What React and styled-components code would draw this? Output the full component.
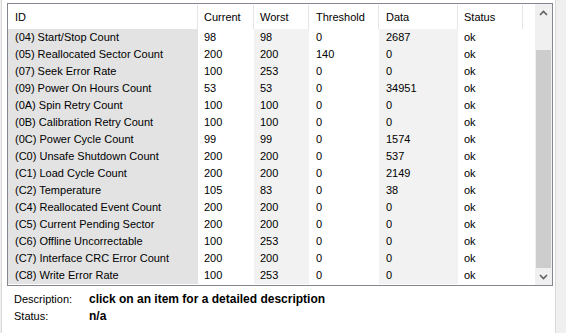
import React from "react";
import styled, { createGlobalStyle } from "styled-components";

const Global = createGlobalStyle`
  html, body { margin: 0; padding: 0; background: #f0f0f0; }
  body { font-family: "Liberation Sans", Arial, sans-serif; font-size: 11px; color: #000; }
`;

const COLS = [
  { key: "id", label: "ID", width: 190, bg: "#e3e3e3" },
  { key: "cur", label: "Current", width: 56, bg: "#ffffff" },
  { key: "worst", label: "Worst", width: 55, bg: "#f2f2f2" },
  { key: "thr", label: "Threshold", width: 70, bg: "#ffffff" },
  { key: "data", label: "Data", width: 79, bg: "#f2f2f2" },
  { key: "status", label: "Status", width: 65, bg: "#ffffff" },
];

const ROWS = [
  ["(04) Start/Stop Count", "98", "98", "0", "2687", "ok"],
  ["(05) Reallocated Sector Count", "200", "200", "140", "0", "ok"],
  ["(07) Seek Error Rate", "100", "253", "0", "0", "ok"],
  ["(09) Power On Hours Count", "53", "53", "0", "34951", "ok"],
  ["(0A) Spin Retry Count", "100", "100", "0", "0", "ok"],
  ["(0B) Calibration Retry Count", "100", "100", "0", "0", "ok"],
  ["(0C) Power Cycle Count", "99", "99", "0", "1574", "ok"],
  ["(C0) Unsafe Shutdown Count", "200", "200", "0", "537", "ok"],
  ["(C1) Load Cycle Count", "200", "200", "0", "2149", "ok"],
  ["(C2) Temperature", "105", "83", "0", "38", "ok"],
  ["(C4) Reallocated Event Count", "200", "200", "0", "0", "ok"],
  ["(C5) Current Pending Sector", "200", "200", "0", "0", "ok"],
  ["(C6) Offline Uncorrectable", "100", "253", "0", "0", "ok"],
  ["(C7) Interface CRC Error Count", "200", "200", "0", "0", "ok"],
  ["(C8) Write Error Rate", "100", "253", "0", "0", "ok"],
];

const Window = styled.div`
  width: 566px;
  height: 333px;
  display: flex;
  background: #f0f0f0;
  overflow: hidden;
`;

const Panel = styled.div`
  margin-left: 1px;
  width: 555px;
  height: 333px;
  background: #ffffff;
  border-left: 1px solid #d9d9d9;
  border-right: 1px solid #d9d9d9;
  box-sizing: border-box;
  padding: 3px 0 0 5px;
  display: flex;
  flex-direction: column;
`;

const ListBox = styled.div`
  width: 546px;
  height: 283px;
  box-sizing: border-box;
  border: 1px solid #828790;
  display: flex;
  background: #fff;
`;

const Table = styled.div`
  flex: 1;
  display: flex;
  flex-direction: column;
  overflow: hidden;
`;

const HeaderRow = styled.div`
  display: flex;
  height: 25px;
  flex: none;
`;

const HeaderCell = styled.div`
  width: ${(p) => p.$w}px;
  box-sizing: border-box;
  padding-left: ${(p) => p.$pad}px;
  display: flex;
  align-items: center;
  position: relative;
  &::after {
    content: "";
    position: absolute;
    right: 0;
    top: 1px;
    bottom: 0;
    width: 1px;
    background: #e5e5e5;
  }
`;

const Row = styled.div`
  display: flex;
  height: 17px;
  flex: none;
`;

const Cell = styled.div`
  width: ${(p) => p.$w}px;
  background: ${(p) => p.$bg};
  box-sizing: border-box;
  padding-left: ${(p) => p.$pad}px;
  line-height: 17px;
  white-space: nowrap;
  overflow: hidden;
`;

const ScrollBar = styled.div`
  width: 17px;
  flex: none;
  background: #f0f0f0;
  display: flex;
  flex-direction: column;
`;

const ArrowBtn = styled.div`
  height: 17px;
  flex: none;
  display: flex;
  align-items: center;
  justify-content: center;
`;

const Track = styled.div`
  flex: 1;
  padding-top: 29px;
  display: flex;
  flex-direction: column;
`;

const Thumb = styled.div`
  flex: 1;
  margin: 0 1px;
  background: #cdcdcd;
`;

const Info = styled.div`
  display: grid;
  grid-template-columns: 75px auto;
  padding: 5px 0 0 7px;
`;

const Label = styled.div`
  line-height: 17px;
`;

const Value = styled.div`
  line-height: 17px;
  font-size: 12px;
  font-weight: bold;
`;

const Chevron = ({ up }) => (
  <svg width="9" height="6" viewBox="0 0 9 6">
    <path
      d={up ? "M1 5 L4.5 1.5 L8 5" : "M1 1 L4.5 4.5 L8 1"}
      fill="none"
      stroke="#606060"
      strokeWidth="1.6"
    />
  </svg>
);

const pads = [7, 6, 6, 7, 7, 6];

export default function App() {
  return (
    <>
      <Global />
      <Window>
        <Panel>
          <ListBox>
            <Table>
              <HeaderRow>
                {COLS.map((c, i) => (
                  <HeaderCell key={c.key} $w={c.width} $pad={pads[i]}>
                    {c.label}
                  </HeaderCell>
                ))}
              </HeaderRow>
              {ROWS.map((r, ri) => (
                <Row key={ri}>
                  {r.map((v, ci) => (
                    <Cell key={ci} $w={COLS[ci].width} $bg={COLS[ci].bg} $pad={pads[ci]}>
                      {v}
                    </Cell>
                  ))}
                </Row>
              ))}
            </Table>
            <ScrollBar>
              <ArrowBtn>
                <Chevron up />
              </ArrowBtn>
              <Track>
                <Thumb />
              </Track>
              <ArrowBtn>
                <Chevron />
              </ArrowBtn>
            </ScrollBar>
          </ListBox>
          <Info>
            <Label>Description:</Label>
            <Value>click on an item for a detailed description</Value>
            <Label>Status:</Label>
            <Value>n/a</Value>
          </Info>
        </Panel>
      </Window>
    </>
  );
}
